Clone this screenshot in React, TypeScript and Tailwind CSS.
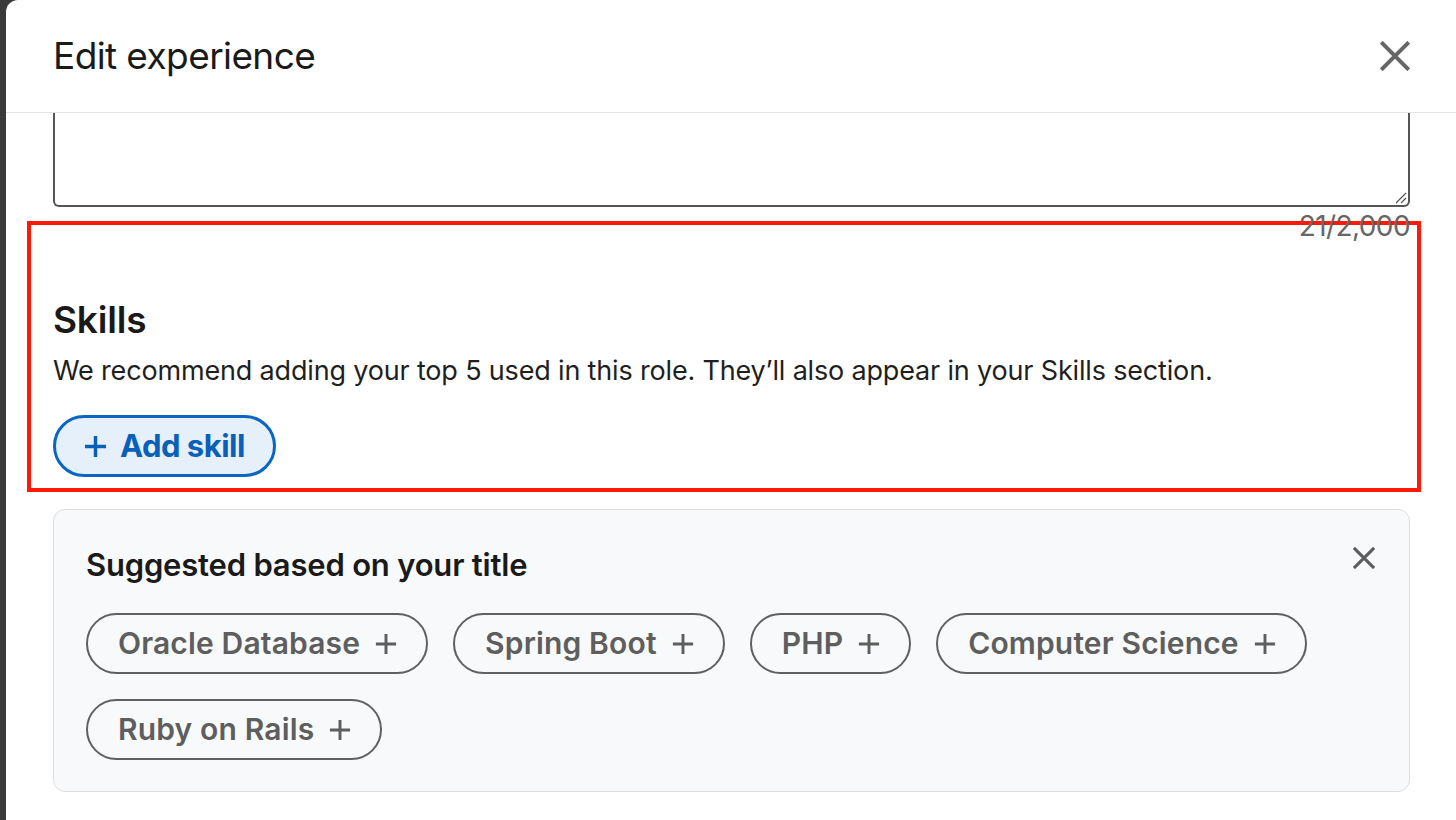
import React from "react";

const font = { fontFamily: "Inter, 'Noto Sans', Arial, sans-serif" };

const suggestions = [
  "Oracle Database",
  "Spring Boot",
  "PHP",
  "Computer Science",
  "Ruby on Rails",
];

function Plus({ className = "", stroke = 3 }: { className?: string; stroke?: number }) {
  return (
    <svg viewBox="0 0 24 24" className={className} fill="none" stroke="currentColor" strokeWidth={stroke} strokeLinecap="butt">
      <path d="M12 1v22M1 12h22" />
    </svg>
  );
}

function Cross({ className = "", stroke = 3 }: { className?: string; stroke?: number }) {
  return (
    <svg viewBox="0 0 24 24" className={className} fill="none" stroke="currentColor" strokeWidth={stroke}>
      <path d="M1 1l22 22M23 1L1 23" />
    </svg>
  );
}

export default function App() {
  return (
    <div className="relative flex h-[820px] w-[1456px] overflow-hidden bg-[#3a3a3a]" style={font}>
      <div className="w-[6px] shrink-0" />

      {/* Modal */}
      <div className="flex flex-1 flex-col rounded-tl-[12px] bg-white">
        {/* Header */}
        <div className="flex h-[113px] shrink-0 items-center justify-between border-b border-[#e3e3e3] pl-[47px] pr-[46px]">
          <h1 className="text-[37px] leading-[46px] font-normal text-[#1a1a1a] tracking-[-0.6px]">Edit experience</h1>
          <Cross className="h-[30px] w-[30px] text-[#666666]" stroke={3.2} />
        </div>

        <div className="flex flex-col pl-[47px] pr-[46px]">
          {/* Textarea (scrolled) */}
          <div className="relative h-[94px] rounded-b-[6px] border-2 border-t-0 border-[#555555]">
            <svg viewBox="0 0 12 12" className="absolute bottom-[1px] right-[1px] h-[12px] w-[12px]" fill="none" stroke="#555" strokeWidth="1.2">
              <path d="M1 11L11 1M6 11l5-5" />
            </svg>
          </div>
          <div className="relative z-10 mt-[2px] text-right text-[28px] leading-[34px] text-[#666666] tracking-[-0.6px]">21/2,000</div>

          {/* Skills */}
          <h2 className="mt-[54px] text-[37px] leading-[46px] font-semibold text-[#1a1a1a] tracking-[-0.2px]">Skills</h2>
          <p className="mt-[11px] text-[27px] leading-[34px] text-[#1f1f1f] tracking-[-0.17px]">
            We recommend adding your top 5 used in this role. They’ll also appear in your Skills section.
          </p>
          <div className="mt-[27px]">
            <button className="flex h-[62px] items-center gap-[13px] rounded-full border-[3px] border-[#0a66c2] bg-[#e6f0fb] pl-[28px] pr-[28px] text-[31px] font-bold text-[#0a5fb8] tracking-[-0.5px]">
              <Plus className="h-[23px] w-[23px]" stroke={3.6} />
              Add skill
            </button>
          </div>

          {/* Suggestions */}
          <div className="mt-[32px] rounded-[12px] border border-[#dedede] bg-[#f8f9fa] pb-[31px] pl-[32px] pr-[34px] pt-[36px]">
            <div className="flex items-start justify-between">
              <h3 className="text-[31px] leading-[38px] font-semibold text-[#1a1a1a] tracking-[-0.2px]">Suggested based on your title</h3>
              <Cross className="mt-[1px] h-[22px] w-[22px] text-[#5e5e5e]" stroke={3.4} />
            </div>
            <div className="mt-[29px] flex flex-wrap gap-[25px]">
              {suggestions.map((s) => (
                <button
                  key={s}
                  className="flex h-[61px] items-center gap-[15px] rounded-full border-2 border-[#606060] pl-[30px] pr-[29px] text-[30px] font-semibold text-[#5e5e5e] tracking-[0.15px]"
                >
                  {s}
                  <Plus className="h-[22px] w-[22px]" stroke={3.2} />
                </button>
              ))}
            </div>
          </div>
        </div>
      </div>

      {/* Annotation box */}
      <div className="pointer-events-none absolute left-[27px] top-[221px] h-[271px] w-[1394px] border-[4px] border-[#fe1a07]" />
    </div>
  );
}
